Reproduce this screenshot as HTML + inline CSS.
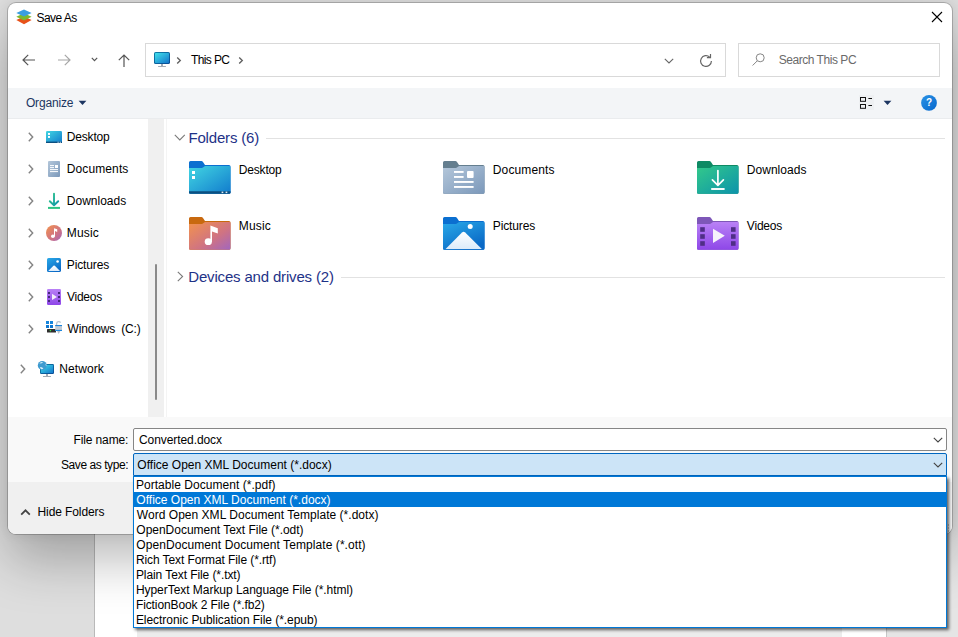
<!DOCTYPE html>
<html>
<head>
<meta charset="utf-8">
<title>Save As</title>
<style>
*{box-sizing:border-box;margin:0;padding:0}
html,body{width:958px;height:637px;overflow:hidden}
body{position:relative;background:#dedede;font-family:"Liberation Sans",sans-serif;font-size:12px;color:#000}
.abs,svg{position:absolute}
.t{position:absolute;white-space:pre}
#docpg{left:94px;top:300px;width:793px;height:337px;background:#fff;border-left:1px solid #b9b9b9;border-right:1px solid #c6c6c6}
#dlg{left:8px;top:3px;width:944px;height:531px;border-radius:8px;background:#fff;overflow:hidden;box-shadow:0 0 0 1px rgba(0,0,0,.20),0 26px 52px 0px rgba(0,0,0,.27),0 0 10px 4px rgba(0,0,0,.04)}
#cmd{left:0;top:85px;width:944px;height:31px;background:#f3f5f7;border-bottom:1px solid #eaecee}
#split{left:140px;top:116px;width:16px;height:298px;background:#f0f0f0}
#bot1{left:0;top:414px;width:944px;height:65px;background:#f9f9f9}
#bot2{left:0;top:479px;width:944px;height:52px;background:#f0f0f0}
.box{position:absolute;background:#fff;border:1px solid #d9d9d9}
.hl{position:absolute;height:1px;background:#e2e2e2}
#list{left:133px;top:476px;width:814px;height:152px;background:#fff;border:1px solid #0078d7;box-shadow:2px 2px 3px rgba(0,0,0,.6)}
#sel{left:134px;top:492px;width:812px;height:15px;background:#0078d7}
</style>
</head>
<body>

<svg width="0" height="0" style="left:0;top:0"><defs>
<linearGradient id="gDesk" x1="0" y1="0" x2="1" y2="1"><stop offset="0" stop-color="#42d6e2"/><stop offset="1" stop-color="#117bcd"/></linearGradient>
<linearGradient id="gMus" x1="0" y1="0" x2="1" y2="1"><stop offset="0" stop-color="#f3934c"/><stop offset=".6" stop-color="#cf7383"/><stop offset="1" stop-color="#a166bf"/></linearGradient>
<linearGradient id="gDoc" x1="0" y1="0" x2="1" y2="1"><stop offset="0" stop-color="#b4c7da"/><stop offset="1" stop-color="#7b98ba"/></linearGradient>
<linearGradient id="gDl" x1="0" y1="0" x2="1" y2="1"><stop offset="0" stop-color="#33c98a"/><stop offset="1" stop-color="#0c93ab"/></linearGradient>
<linearGradient id="gPic" x1="0" y1="0" x2=".6" y2="1"><stop offset="0" stop-color="#2aa9e8"/><stop offset="1" stop-color="#0a69c6"/></linearGradient>
<linearGradient id="gVid" x1="0" y1="0" x2="0" y2="1"><stop offset="0" stop-color="#b981f6"/><stop offset="1" stop-color="#8e47e8"/></linearGradient>
<linearGradient id="gPc" x1="0" y1="0" x2="1" y2="1"><stop offset="0" stop-color="#40e0ea"/><stop offset="1" stop-color="#1476cb"/></linearGradient>
<linearGradient id="gPcB" x1="0" y1="0" x2="1" y2="1"><stop offset="0" stop-color="#0d7fa8"/><stop offset="1" stop-color="#0a4b95"/></linearGradient>
<linearGradient id="gWhite" x1="0" y1="0" x2="0" y2="1"><stop offset="0" stop-color="#ffffff"/><stop offset="1" stop-color="#dcebfa"/></linearGradient>
</defs></svg>

<div class="abs" style="left:887px;top:300px;width:71px;height:337px;background:#e5e5e5"></div><div id="docpg" class="abs"></div><div class="abs" style="left:137px;top:628px;width:705px;height:9px;background:#ececec"></div>
<div id="dlg" class="abs">
<div id="cmd" class="abs"></div><div id="split" class="abs"></div>
<div class="abs" style="left:158px;top:116px;width:1px;height:298px;background:#f4f4f4"></div>
<div id="bot1" class="abs"></div><div id="bot2" class="abs"></div>
</div>
<svg style="left:16px;top:9px" width="16" height="16" viewBox="0 0 16 16">
<path d="M8 7.4 L15.6 11 L8 15.2 L0.3 11Z" fill="#e8511a"/>
<path d="M8 4.2 L15.6 7.7 L8 11.6 L0.3 7.7Z" fill="#7cb82f"/>
<path d="M8 0.4 L15.6 4 L8 7.6 L0.3 4Z" fill="#3a9ee0"/></svg>
<div class="t" style="left:36.46px;top:10.00px;font-size:12px;line-height:16px;height:16px;letter-spacing:-0.542px;">Save As</div>
<svg style="left:931px;top:11px" width="12" height="12" viewBox="0 0 12 12"><path d="M1 1L11 11M11 1L1 11" stroke="#000" stroke-width="1.1" fill="none"/></svg>
<svg style="left:22px;top:53px" width="14" height="14" viewBox="0 0 14 14"><path d="M13 7H1.2M6.2 1.8L1 7l5.2 5.2" stroke="#555" stroke-width="1.2" fill="none"/></svg>
<svg style="left:57px;top:53px" width="14" height="14" viewBox="0 0 14 14"><path d="M1 7h11.8M7.8 1.8L13 7l-5.2 5.2" stroke="#a6a6a6" stroke-width="1.2" fill="none"/></svg>
<svg style="left:91px;top:57px" width="7" height="5" viewBox="0 0 7 5"><path d="M0.8 0.8L3.5 3.6L6.2 0.8" stroke="#555" stroke-width="1.2" fill="none"/></svg>
<svg style="left:116.5px;top:53.7px" width="14" height="14" viewBox="0 0 14 14"><path d="M7 13V1.2M1.8 6.2L7 1l5.2 5.2" stroke="#555" stroke-width="1.2" fill="none"/></svg>
<div class="box" style="left:145px;top:43px;width:581px;height:34px"></div>
<div class="box" style="left:738px;top:43px;width:202px;height:34px"></div>
<svg style="left:153px;top:51px" width="18" height="17" viewBox="0 0 18 17">
<rect x="8" y="12" width="2" height="3.2" fill="#a3abb5"/><rect x="5" y="15" width="8" height="1.1" rx=".4" fill="#a3abb5"/>
<rect x="1" y="1" width="16" height="12" rx="1.6" fill="url(#gPcB)"/><rect x="2" y="2" width="14" height="10" rx=".7" fill="url(#gPc)"/></svg>
<svg style="left:176px;top:56px" width="6" height="9" viewBox="0 0 6 9"><path d="M1.2 1.4L4.3 4.5L1.2 7.6" stroke="#606060" stroke-width="1.35" fill="none"/></svg>
<div class="t" style="left:190.93px;top:52.00px;font-size:12px;line-height:16px;height:16px;letter-spacing:-0.593px;">This PC</div>
<svg style="left:238px;top:56px" width="6" height="9" viewBox="0 0 6 9"><path d="M1.2 1.4L4.3 4.5L1.2 7.6" stroke="#606060" stroke-width="1.35" fill="none"/></svg>
<svg style="left:664px;top:58px" width="10" height="6" viewBox="0 0 10 6"><path d="M0.8 0.8L5 5L9.2 0.8" stroke="#666" stroke-width="1.1" fill="none"/></svg>
<svg style="left:698px;top:53px" width="16" height="16" viewBox="0 0 16 16"><path d="M13.4 8a5.4 5.4 0 1 1-1.7-3.9" stroke="#666" stroke-width="1.2" fill="none"/><path d="M12.5 1v3.6H8.9" stroke="#666" stroke-width="1.2" fill="none"/></svg>
<svg style="left:751.3px;top:52.4px" width="16" height="16" viewBox="0 0 16 16"><circle cx="9.2" cy="5.8" r="4" stroke="#858585" stroke-width="1" fill="none"/><path d="M6.3 8.8L1.6 13.5" stroke="#858585" stroke-width="1"/></svg>
<div class="t" style="left:778.66px;top:52.00px;font-size:12px;line-height:16px;height:16px;letter-spacing:-0.455px;color:#6a6a6a;">Search This PC</div>
<div class="t" style="left:25.93px;top:95.00px;font-size:12px;line-height:16px;height:16px;letter-spacing:-0.172px;color:#1c3561;">Organize</div>
<svg style="left:78px;top:100px" width="9" height="6" viewBox="0 0 9 6"><path d="M0.6 0.8H8.4L4.5 4.9Z" fill="#1c3561"/></svg>
<div class="abs" style="left:859px;top:95px;width:15px;height:15px;background:#eef0f2"></div><svg style="left:859px;top:96px" width="16" height="14" viewBox="0 0 16 14"><rect x="1.5" y="1.5" width="5" height="3.8" stroke="#111" fill="none" stroke-width="1"/><rect x="1.5" y="8.5" width="5" height="3.8" stroke="#111" fill="none" stroke-width="1"/><path d="M9.4 2.5h3.6M9.4 9.5h3.6" stroke="#111" stroke-width="1"/></svg>
<svg style="left:883px;top:100px" width="9" height="6" viewBox="0 0 9 6"><path d="M0.6 0.8H8.4L4.5 4.9Z" fill="#1c3561"/></svg>
<svg style="left:920px;top:94px" width="18" height="18" viewBox="0 0 18 18"><defs><linearGradient id="gH" x1="0" y1="0" x2="1" y2="1"><stop offset="0" stop-color="#2b93e6"/><stop offset="1" stop-color="#0667cc"/></linearGradient></defs><circle cx="9" cy="8.9" r="7.9" fill="url(#gH)"/><text x="9" y="12.4" font-family="Liberation Sans" font-size="10" font-weight="700" fill="#fff" text-anchor="middle">?</text></svg>
<svg style="left:27.5px;top:132px" width="6" height="10" viewBox="0 0 6 10"><path d="M0.8 0.8L4.7 5.0L0.8 9.2" stroke="#848484" stroke-width="1.4" fill="none"/></svg>
<div class="t" style="left:66.82px;top:129.00px;font-size:12px;line-height:16px;height:16px;letter-spacing:-0.190px;">Desktop</div>
<svg style="left:27.5px;top:164px" width="6" height="10" viewBox="0 0 6 10"><path d="M0.8 0.8L4.7 5.0L0.8 9.2" stroke="#848484" stroke-width="1.4" fill="none"/></svg>
<div class="t" style="left:66.82px;top:161.00px;font-size:12px;line-height:16px;height:16px;letter-spacing:0.102px;">Documents</div>
<svg style="left:27.5px;top:196px" width="6" height="10" viewBox="0 0 6 10"><path d="M0.8 0.8L4.7 5.0L0.8 9.2" stroke="#848484" stroke-width="1.4" fill="none"/></svg>
<div class="t" style="left:66.82px;top:193.00px;font-size:12px;line-height:16px;height:16px;letter-spacing:0.005px;">Downloads</div>
<svg style="left:27.5px;top:228px" width="6" height="10" viewBox="0 0 6 10"><path d="M0.8 0.8L4.7 5.0L0.8 9.2" stroke="#848484" stroke-width="1.4" fill="none"/></svg>
<div class="t" style="left:66.82px;top:225.00px;font-size:12px;line-height:16px;height:16px;letter-spacing:0.164px;">Music</div>
<svg style="left:27.5px;top:260px" width="6" height="10" viewBox="0 0 6 10"><path d="M0.8 0.8L4.7 5.0L0.8 9.2" stroke="#848484" stroke-width="1.4" fill="none"/></svg>
<div class="t" style="left:66.82px;top:257.00px;font-size:12px;line-height:16px;height:16px;letter-spacing:-0.134px;">Pictures</div>
<svg style="left:27.5px;top:292px" width="6" height="10" viewBox="0 0 6 10"><path d="M0.8 0.8L4.7 5.0L0.8 9.2" stroke="#848484" stroke-width="1.4" fill="none"/></svg>
<div class="t" style="left:66.95px;top:289.00px;font-size:12px;line-height:16px;height:16px;letter-spacing:-0.240px;">Videos</div>
<svg style="left:27.5px;top:324px" width="6" height="10" viewBox="0 0 6 10"><path d="M0.8 0.8L4.7 5.0L0.8 9.2" stroke="#848484" stroke-width="1.4" fill="none"/></svg>
<div class="t" style="left:67.55px;top:321.00px;font-size:12px;line-height:16px;height:16px;letter-spacing:-0.179px;">Windows  (C:)</div>
<svg style="left:19.8px;top:364px" width="6" height="10" viewBox="0 0 6 10"><path d="M0.8 0.8L4.7 5.0L0.8 9.2" stroke="#848484" stroke-width="1.4" fill="none"/></svg>
<div class="t" style="left:59.32px;top:361.00px;font-size:12px;line-height:16px;height:16px;letter-spacing:0.075px;">Network</div>
<div class="abs" style="left:154.5px;top:264px;width:2px;height:136px;background:#8a8a8a;border-radius:1px"></div>
<svg style="left:46px;top:131px" width="16" height="12" viewBox="0 0 16 12"><rect width="16" height="12" rx="1.2" fill="url(#gDesk)"/><rect x="0" y="10.6" width="16" height="1.4" fill="#0c4f80"/><rect x="2" y="2" width="2" height="1.9" fill="#fff"/><rect x="2" y="5" width="2" height="1.9" fill="#fff"/><rect x="11.6" y="10.7" width="1" height="1.1" fill="#dfeaf2"/><rect x="13.8" y="10.7" width="1" height="1.1" fill="#dfeaf2"/></svg>
<svg style="left:48px;top:161px" width="12" height="16" viewBox="0 0 12 16"><rect width="12" height="16" rx="1" fill="url(#gDoc)"/><rect x="2" y="4.1" width="4" height="1" fill="#fff"/><rect x="2" y="6.1" width="4" height="1" fill="#fff"/><rect x="2" y="8.1" width="8" height="1" fill="#fff"/><rect x="2" y="10.1" width="8" height="1" fill="#fff"/><rect x="7" y="4" width="3" height="3" fill="#fff"/></svg>
<svg style="left:47px;top:192px" width="14" height="18" viewBox="0 0 14 18"><path d="M7 1.6V13M2.8 9.2L7 13.3L11.2 9.2" stroke="url(#gDl)" stroke-width="1.9" fill="none" stroke-linecap="round" stroke-linejoin="round"/><path d="M1 15.9H13" stroke="#2bc383" stroke-width="2"/></svg>
<svg style="left:46px;top:225px" width="16" height="16" viewBox="0 0 16 16"><circle cx="8" cy="8" r="8" fill="url(#gMus)"/><ellipse cx="6.9" cy="11.2" rx="1.9" ry="1.7" fill="#fff"/><path d="M8 11.2V3.2L11.2 4.3V6.9L9 6.1V11.2Z" fill="#fff"/></svg>
<svg style="left:47px;top:258px" width="14" height="14" viewBox="0 0 14 14"><rect width="14" height="14" rx="1.6" fill="url(#gPic)"/><path d="M1.2 12.9L6.4 7.8Q7.1 7.1 7.8 7.8L13 12.9Z" fill="url(#gWhite)"/><circle cx="10.6" cy="3.5" r="1.3" fill="#fff"/></svg>
<svg style="left:47px;top:289px" width="14" height="16" viewBox="0 0 14 16"><rect width="14" height="16" rx="1.2" fill="url(#gVid)"/><rect x="1" y="3" width="2" height="2" fill="#45297a"/><rect x="1" y="7" width="2" height="2" fill="#45297a"/><rect x="1" y="11" width="2" height="2" fill="#45297a"/><rect x="11" y="3" width="2" height="2" fill="#45297a"/><rect x="11" y="7" width="2" height="2" fill="#45297a"/><rect x="11" y="11" width="2" height="2" fill="#45297a"/><path d="M5 4.8L10 7.9L5 11Z" fill="#f3eefa"/></svg>
<svg style="left:46px;top:320px" width="17" height="15" viewBox="0 0 17 15"><rect x="0" y="1" width="3" height="3" fill="#1585dc"/><rect x="4" y="1" width="3" height="3" fill="#1585dc"/><rect x="0" y="5" width="3" height="3" fill="#0f78d2"/><rect x="4" y="5" width="3" height="3" fill="#0f78d2"/><rect x="1" y="9" width="9" height="3.6" rx=".5" fill="#2e2e2e"/><circle cx="4.4" cy="10.6" r=".8" fill="#3ce04a"/><path d="M10.6 5V3.6A2.2 2.2 0 0 1 14.6 2.6" stroke="#b9c4cf" stroke-width="1.3" fill="none"/><rect x="9.2" y="5" width="6.8" height="6" fill="#c5ccd4"/><rect x="9.2" y="5" width="6.8" height="1.1" fill="#1b86dd"/><rect x="9.2" y="9.9" width="6.8" height="1.1" fill="#1b86dd"/><path d="M11 11H14.4L12.7 14Z" fill="#b4c0cb"/></svg>
<svg style="left:37px;top:360px" width="18" height="18" viewBox="0 0 18 18"><rect x="9" y="14" width="2" height="2.2" fill="#a3abb5"/><rect x="6" y="16" width="8" height="1" fill="#a3abb5"/><rect x="3" y="4" width="14" height="10" rx="1.2" fill="url(#gPcB)"/><rect x="3.9" y="4.9" width="12.2" height="8.2" rx=".5" fill="url(#gPc)"/><circle cx="5.3" cy="5.4" r="4.5" fill="#3f9bd0"/><path d="M2.4 3.4Q4 1.8 6 2.2Q5 3.6 2.4 3.4ZM3 7.2Q5 6.6 6.4 8.6Q5 9.6 3.6 8.8ZM8.6 3.4Q9.8 4.6 9.4 6.2Q8.4 5.4 8.6 3.4Z" fill="#d8eef8"/></svg>
<svg style="left:174px;top:134px" width="12" height="8" viewBox="0 0 12 8"><path d="M0.8 0.9L5.8 5.9L10.8 0.9" stroke="#7a7a7a" stroke-width="1.1" fill="none"/></svg>
<div class="t" style="left:188.47px;top:128.00px;font-size:15px;line-height:20px;height:20px;letter-spacing:-0.177px;color:#1e3287;">Folders (6)</div>
<div class="hl" style="left:266px;top:138px;width:679px"></div>
<svg style="left:177px;top:271px" width="7" height="11" viewBox="0 0 7 11"><path d="M0.8 0.8L5.6 5.5L0.8 10.2" stroke="#7a7a7a" stroke-width="1.1" fill="none"/></svg>
<div class="t" style="left:188.27px;top:267.00px;font-size:15px;line-height:20px;height:20px;letter-spacing:-0.170px;color:#1e3287;">Devices and drives (2)</div>
<div class="hl" style="left:341px;top:277px;width:604px"></div>
<svg style="left:189px;top:161px" width="42" height="34" viewBox="0 0 42 34"><path d="M0 1.5Q0 0 1.5 0H12.4Q13.4 0 14 0.9L16 4.1H40Q41.5 4.1 41.5 5.6V31.3Q41.5 32.8 40 32.8H1.5Q0 32.8 0 31.3Z" fill="#0b6fd0"/><path d="M0 6.9H12.6Q13.6 6.9 14.3 6.3L15.6 5.3Q16 5 16.6 5H40.2Q41.5 5 41.5 6.3V31.3Q41.5 32.8 40 32.8H1.5Q0 32.8 0 31.3Z" fill="url(#gDesk)"/><path d="M0 31.3Q0 32.8 1.5 32.8H40Q41.5 32.8 41.5 31.3V30.2H0Z" fill="#0c4f80"/><rect x="3" y="10" width="3" height="3" fill="#fff"/><rect x="3" y="15" width="3" height="3" fill="#fff"/><rect x="32.6" y="30.6" width="1.7" height="1.5" fill="#dfeaf2"/><rect x="36.6" y="30.6" width="1.7" height="1.5" fill="#dfeaf2"/></svg>
<svg style="left:443px;top:161px" width="42" height="34" viewBox="0 0 42 34"><path d="M0 1.5Q0 0 1.5 0H12.4Q13.4 0 14 0.9L16 4.1H40Q41.5 4.1 41.5 5.6V31.3Q41.5 32.8 40 32.8H1.5Q0 32.8 0 31.3Z" fill="#647e8f"/><path d="M0 6.9H12.6Q13.6 6.9 14.3 6.3L15.6 5.3Q16 5 16.6 5H40.2Q41.5 5 41.5 6.3V31.3Q41.5 32.8 40 32.8H1.5Q0 32.8 0 31.3Z" fill="url(#gDoc)"/><rect x="11" y="10" width="9.6" height="1.9" fill="#fff"/><rect x="11" y="15" width="9.6" height="1.9" fill="#fff"/><rect x="11" y="20" width="19.6" height="1.9" fill="#fff"/><rect x="11" y="25" width="19.6" height="1.9" fill="#fff"/><rect x="24" y="10" width="6.6" height="6.9" rx="1" fill="#fff"/></svg>
<svg style="left:697px;top:161px" width="42" height="34" viewBox="0 0 42 34"><path d="M0 1.5Q0 0 1.5 0H12.4Q13.4 0 14 0.9L16 4.1H40Q41.5 4.1 41.5 5.6V31.3Q41.5 32.8 40 32.8H1.5Q0 32.8 0 31.3Z" fill="#0e8a64"/><path d="M0 6.9H12.6Q13.6 6.9 14.3 6.3L15.6 5.3Q16 5 16.6 5H40.2Q41.5 5 41.5 6.3V31.3Q41.5 32.8 40 32.8H1.5Q0 32.8 0 31.3Z" fill="url(#gDl)"/><path d="M20.9 9.5V24M15.4 18.8L20.9 24.3L26.4 18.8" stroke="#fff" stroke-width="1.7" fill="none" stroke-linecap="round" stroke-linejoin="round"/><path d="M14.2 28H27.6" stroke="#fff" stroke-width="1.9"/></svg>
<svg style="left:189px;top:217px" width="42" height="34" viewBox="0 0 42 34"><path d="M0 1.5Q0 0 1.5 0H12.4Q13.4 0 14 0.9L16 4.1H40Q41.5 4.1 41.5 5.6V31.3Q41.5 32.8 40 32.8H1.5Q0 32.8 0 31.3Z" fill="#c8690f"/><path d="M0 6.9H12.6Q13.6 6.9 14.3 6.3L15.6 5.3Q16 5 16.6 5H40.2Q41.5 5 41.5 6.3V31.3Q41.5 32.8 40 32.8H1.5Q0 32.8 0 31.3Z" fill="url(#gMus)"/><ellipse cx="19.3" cy="24.7" rx="3.6" ry="3.4" fill="#fff"/><path d="M21.4 25V8.6L28.8 11.2V16.4L23 14.4V25Z" fill="#fff"/></svg>
<svg style="left:443px;top:217px" width="42" height="34" viewBox="0 0 42 34"><path d="M0 1.5Q0 0 1.5 0H12.4Q13.4 0 14 0.9L16 4.1H40Q41.5 4.1 41.5 5.6V31.3Q41.5 32.8 40 32.8H1.5Q0 32.8 0 31.3Z" fill="#0b6fd0"/><path d="M0 6.9H12.6Q13.6 6.9 14.3 6.3L15.6 5.3Q16 5 16.6 5H40.2Q41.5 5 41.5 6.3V31.3Q41.5 32.8 40 32.8H1.5Q0 32.8 0 31.3Z" fill="url(#gPic)"/><path d="M2.6 32L19 15.4Q20.6 13.9 22.2 15.4L38.8 32Z" fill="url(#gWhite)"/><circle cx="27.2" cy="9.6" r="2.5" fill="#fff"/></svg>
<svg style="left:697px;top:217px" width="42" height="34" viewBox="0 0 42 34"><path d="M0 1.5Q0 0 1.5 0H12.4Q13.4 0 14 0.9L16 4.1H40Q41.5 4.1 41.5 5.6V31.3Q41.5 32.8 40 32.8H1.5Q0 32.8 0 31.3Z" fill="#7e57b8"/><path d="M0 6.9H12.6Q13.6 6.9 14.3 6.3L15.6 5.3Q16 5 16.6 5H40.2Q41.5 5 41.5 6.3V31.3Q41.5 32.8 40 32.8H1.5Q0 32.8 0 31.3Z" fill="url(#gVid)"/><rect x="3.2" y="10.2" width="4.6" height="4.6" fill="#4f2e86"/><rect x="3.2" y="17.2" width="4.6" height="4.6" fill="#4f2e86"/><rect x="3.2" y="24.2" width="4.6" height="4.6" fill="#4f2e86"/><rect x="34" y="10.2" width="4.6" height="4.6" fill="#4f2e86"/><rect x="34" y="17.2" width="4.6" height="4.6" fill="#4f2e86"/><rect x="34" y="24.2" width="4.6" height="4.6" fill="#4f2e86"/><path d="M16 11.8L27.8 18.8L16 26Z" fill="#f6f2fb"/></svg>
<div class="t" style="left:238.82px;top:162.00px;font-size:12px;line-height:16px;height:16px;letter-spacing:-0.190px;">Desktop</div>
<div class="t" style="left:492.82px;top:162.00px;font-size:12px;line-height:16px;height:16px;letter-spacing:0.114px;">Documents</div>
<div class="t" style="left:746.82px;top:162.00px;font-size:12px;line-height:16px;height:16px;letter-spacing:0.030px;">Downloads</div>
<div class="t" style="left:238.82px;top:218.00px;font-size:12px;line-height:16px;height:16px;letter-spacing:0.164px;">Music</div>
<div class="t" style="left:492.82px;top:218.00px;font-size:12px;line-height:16px;height:16px;letter-spacing:-0.134px;">Pictures</div>
<div class="t" style="left:746.85px;top:218.00px;font-size:12px;line-height:16px;height:16px;letter-spacing:-0.200px;">Videos</div>
<div class="t" style="left:73.52px;top:432.00px;font-size:12px;line-height:16px;height:16px;letter-spacing:-0.128px;">File name:</div>
<div class="t" style="left:61.06px;top:457.00px;font-size:12px;line-height:16px;height:16px;letter-spacing:-0.440px;">Save as type:</div>
<div class="abs" style="left:133px;top:428px;width:814px;height:23px;background:#fff;border:1px solid #868686;border-radius:2px"></div>
<div class="abs" style="left:133px;top:453px;width:814px;height:23px;background:#cce4f7;border:1px solid #0067c0;border-radius:2px 2px 0 0"></div>
<div class="t" style="left:138.99px;top:432.00px;font-size:12px;line-height:16px;height:16px;letter-spacing:-0.078px;">Converted.docx</div>
<div class="t" style="left:137.33px;top:457.00px;font-size:12px;line-height:16px;height:16px;letter-spacing:0.007px;">Office Open XML Document (*.docx)</div>
<svg style="left:933px;top:437px" width="10" height="6" viewBox="0 0 10 6"><path d="M0.8 0.8L5 5L9.2 0.8" stroke="#444" stroke-width="1.1" fill="none"/></svg>
<svg style="left:933px;top:462px" width="10" height="6" viewBox="0 0 10 6"><path d="M0.8 0.8L5 5L9.2 0.8" stroke="#444" stroke-width="1.1" fill="none"/></svg>
<svg style="left:20px;top:509px" width="11" height="7" viewBox="0 0 11 7"><path d="M1.2 5.6L5.5 1.3L9.8 5.6" stroke="#444" stroke-width="1.8" fill="none"/></svg>
<div class="t" style="left:37.52px;top:504.00px;font-size:12px;line-height:16px;height:16px;letter-spacing:-0.101px;">Hide Folders</div>
<div id="list" class="abs"></div><div id="sel" class="abs"></div>
<div class="abs" style="left:947.6px;top:524px;width:1.6px;height:1.6px;background:#777"></div><div class="abs" style="left:947.6px;top:527px;width:1.6px;height:1.6px;background:#777"></div><div class="abs" style="left:947.6px;top:530px;width:1.6px;height:1.6px;background:#777"></div>
<div class="t" style="left:135.92px;top:477.00px;font-size:12px;line-height:16px;height:16px;letter-spacing:0.039px;">Portable Document (*.pdf)</div>
<div class="t" style="left:136.33px;top:492.00px;font-size:12px;line-height:16px;height:16px;letter-spacing:0.005px;color:#fff;">Office Open XML Document (*.docx)</div>
<div class="t" style="left:136.85px;top:507.00px;font-size:12px;line-height:16px;height:16px;letter-spacing:0.027px;">Word Open XML Document Template (*.dotx)</div>
<div class="t" style="left:136.33px;top:522.00px;font-size:12px;line-height:16px;height:16px;letter-spacing:-0.021px;">OpenDocument Text File (*.odt)</div>
<div class="t" style="left:136.33px;top:537.00px;font-size:12px;line-height:16px;height:16px;letter-spacing:0.073px;">OpenDocument Document Template (*.ott)</div>
<div class="t" style="left:135.92px;top:552.00px;font-size:12px;line-height:16px;height:16px;letter-spacing:-0.097px;">Rich Text Format File (*.rtf)</div>
<div class="t" style="left:135.92px;top:567.00px;font-size:12px;line-height:16px;height:16px;letter-spacing:-0.082px;">Plain Text File (*.txt)</div>
<div class="t" style="left:135.92px;top:582.00px;font-size:12px;line-height:16px;height:16px;letter-spacing:-0.042px;">HyperText Markup Language File (*.html)</div>
<div class="t" style="left:135.92px;top:597.00px;font-size:12px;line-height:16px;height:16px;letter-spacing:-0.098px;">FictionBook 2 File (*.fb2)</div>
<div class="t" style="left:135.92px;top:612.00px;font-size:12px;line-height:16px;height:16px;letter-spacing:-0.050px;">Electronic Publication File (*.epub)</div>
</body>
</html>
